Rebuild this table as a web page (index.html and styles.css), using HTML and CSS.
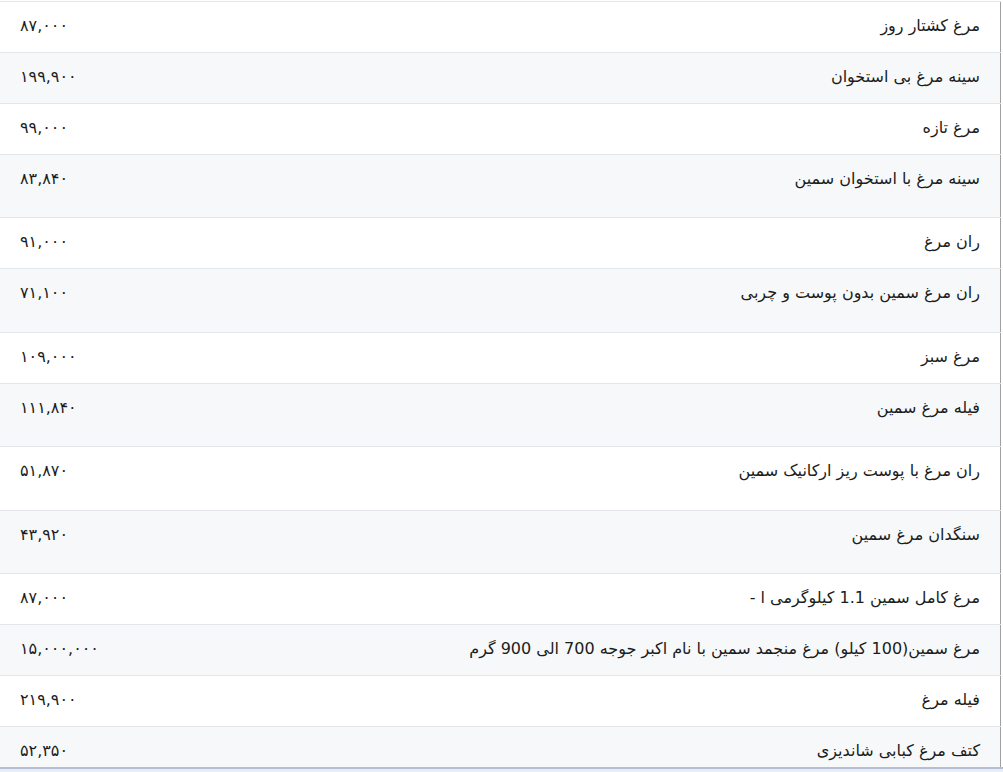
FILE: index.html
```html
<!DOCTYPE html>
<html lang="fa">
<head>
<meta charset="utf-8">
<link rel="stylesheet" href="styles.css">
</head>
<body>
<div class="frame">
<table class="prices" dir="rtl">
<tbody>
<tr><td class="name">مرغ کشتار روز</td><td class="price">۸۷,۰۰۰</td></tr>
<tr><td class="name">سینه مرغ بی استخوان</td><td class="price">۱۹۹,۹۰۰</td></tr>
<tr><td class="name">مرغ تازه</td><td class="price">۹۹,۰۰۰</td></tr>
<tr class="tall"><td class="name">سینه مرغ با استخوان سمین</td><td class="price">۸۳,۸۴۰</td></tr>
<tr><td class="name">ران مرغ</td><td class="price">۹۱,۰۰۰</td></tr>
<tr class="tall"><td class="name">ران مرغ سمین بدون پوست و چربی</td><td class="price">۷۱,۱۰۰</td></tr>
<tr><td class="name">مرغ سبز</td><td class="price">۱۰۹,۰۰۰</td></tr>
<tr class="tall"><td class="name">فیله مرغ سمین</td><td class="price">۱۱۱,۸۴۰</td></tr>
<tr class="tall"><td class="name">ران مرغ با پوست ریز ارکانیک سمین</td><td class="price">۵۱,۸۷۰</td></tr>
<tr class="tall"><td class="name">سنگدان مرغ سمین</td><td class="price">۴۳,۹۲۰</td></tr>
<tr><td class="name">مرغ کامل سمین 1.1 کیلوگرمی ا -</td><td class="price">۸۷,۰۰۰</td></tr>
<tr><td class="name">مرغ سمین(100 کیلو) مرغ منجمد سمین با نام اکبر جوجه 700 الی 900 گرم</td><td class="price">۱۵,۰۰۰,۰۰۰</td></tr>
<tr><td class="name">فیله مرغ</td><td class="price">۲۱۹,۹۰۰</td></tr>
<tr><td class="name">کتف مرغ کبابی شاندیزی</td><td class="price">۵۲,۳۵۰</td></tr>
</tbody>
</table>
</div>
</body>
</html>
```
FILE: styles.css
```css
html, body {
  margin: 0;
  padding: 0;
  background: #e9edf3;
}
body {
  font-family: "DejaVu Sans", "Noto Sans", sans-serif;
  color: #1a1d20;
  font-size: 16px;
}
.frame {
  width: 1003px;
  height: 769px;
  overflow: hidden;
  background: #ffffff;
  border-bottom: 2px solid #b4c0d4;
  padding-top: 1px;
  box-sizing: border-box;
}
.prices {
  width: 1001px;
  border-collapse: collapse;
  border-top: 1px solid #e3e6ea;
  border-right: 1px solid #a0a0a0;
}
.prices td {
  border-bottom: 1px solid #e3e6ea;
  padding: 11px 20px 13px;
  line-height: 26px;
  height: 26px;
  vertical-align: top;
  white-space: nowrap;
}
.prices tr:nth-child(even) td {
  background: #f7f8fa;
}
.prices tr.tall td {
  padding-bottom: 25.4px;
}
.name {
  text-align: right;
}
.price {
  text-align: left;
  width: 1%;
  padding-left: 19px;
}
```
